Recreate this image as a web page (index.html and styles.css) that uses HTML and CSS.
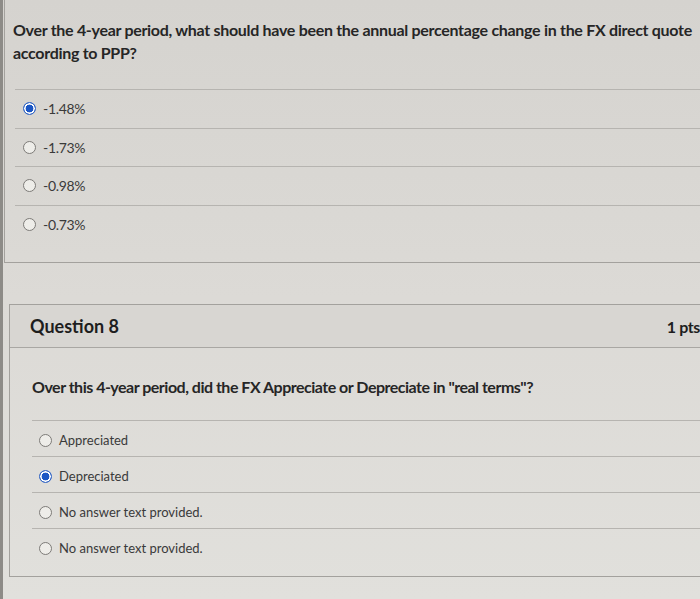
FILE: index.html
```html
<!DOCTYPE html>
<html>
<head>
<meta charset="utf-8">
<link rel="stylesheet" href="styles.css">
</head>
<body>
<div class="frame">
  <div class="card card-top">
    <div class="q-text q-text-top">Over the 4-year period, what should have been the annual percentage change in the FX direct quote according to PPP?</div>
    <div class="answers answers-top">
      <div class="answer"><span class="radio checked"></span><span class="label">-1.48%</span></div>
      <div class="answer"><span class="radio"></span><span class="label">-1.73%</span></div>
      <div class="answer"><span class="radio"></span><span class="label">-0.98%</span></div>
      <div class="answer last"><span class="radio"></span><span class="label">-0.73%</span></div>
    </div>
  </div>

  <div class="card card-q8">
    <div class="q-header">
      <span class="q-title">Question 8</span>
      <span class="q-pts">1 pts</span>
    </div>
    <div class="q-body">
      <div class="q-text q-text-8">Over this 4-year period, did the FX Appreciate or Depreciate in "real terms"?</div>
      <div class="answers answers-8">
        <div class="answer"><span class="radio"></span><span class="label">Appreciated</span></div>
        <div class="answer"><span class="radio checked"></span><span class="label">Depreciated</span></div>
        <div class="answer"><span class="radio"></span><span class="label">No answer text provided.</span></div>
        <div class="answer last"><span class="radio"></span><span class="label">No answer text provided.</span></div>
      </div>
    </div>
  </div>
</div>
</body>
</html>
```

FILE: styles.css
```css
html, body {
  margin: 0;
  padding: 0;
  height: 100%;
  overflow: hidden;
}
body {
  background: #dad8d4;
  font-family: Lato, "Open Sans", sans-serif;
  color: #2b2b2b;
}
.frame {
  border-left: 3px solid #8d8b87;
  min-height: 100%;
  box-sizing: border-box;
  padding-left: 1px;
  background: linear-gradient(#d5d3cf, #dcdad6 50%, #e1e0dc);
}
.card {
  border-left: 1px solid #a3a19d;
  border-bottom: 1px solid #a3a19d;
  width: 760px;
  box-sizing: border-box;
}
.card-top {
  padding-bottom: 19px;
}
.q-text {
  font-weight: 700;
  font-size: 16px;
  line-height: 23px;
  color: #262626;
  letter-spacing: -0.3px;
}
.q-text-top {
  padding: 18px 0 0 8px;
  width: 690px;
}
.answers {
  display: flex;
  flex-direction: column;
}
.answers-top {
  margin: 25px 0 0 10px;
  border-top: 1px solid #b6b4b0;
}
.answer {
  display: flex;
  align-items: center;
  border-bottom: 1px solid #b6b4b0;
  font-size: 14px;
  color: #3a3a3a;
}
.answer.last {
  border-bottom: none;
}
.answers-top .answer {
  height: 37.5px;
  padding-left: 8px;
  letter-spacing: -0.3px;
}
.radio {
  width: 11px;
  height: 11px;
  border-radius: 50%;
  border: 1px solid #7d7b78;
  background: #eeede9;
  box-sizing: content-box;
  flex: none;
  margin-right: 7px;
}
.radio.checked {
  border: 1px solid #2f63c4;
  background: radial-gradient(circle, #1b56c4 0 3.6px, #ffffff 4.2px 5px, #5a86d6 5.5px);
}
.card-q8 {
  margin: 41px 0 0 5px;
  border-top: 1px solid #a3a19d;
  height: 273px;
}
.q-header {
  height: 42px;
  border-bottom: 1px solid #a9a7a3;
  display: flex;
  align-items: center;
  background: #d8d6d2;
  padding-left: 20px;
  width: 670px;
  box-sizing: content-box;
  justify-content: space-between;
}
.q-title {
  font-weight: 700;
  font-size: 18px;
  color: #1e1e1e;
}
.q-pts {
  font-weight: 700;
  font-size: 16px;
  color: #1e1e1e;
  letter-spacing: -0.4px;
}
.q-body {
  padding: 28px 0 0 22px;
}
.q-text-8 {
  line-height: 22px;
  letter-spacing: -0.5px;
}
.answers-8 {
  margin-top: 22px;
  border-top: 1px solid #b6b4b0;
}
.answers-8 .answer {
  padding: 3px 0 0 7px;
  font-size: 13px;
  box-sizing: content-box;
  height: 32px;
}
.answers-8 .radio {
  margin-right: 7px;
}
```
